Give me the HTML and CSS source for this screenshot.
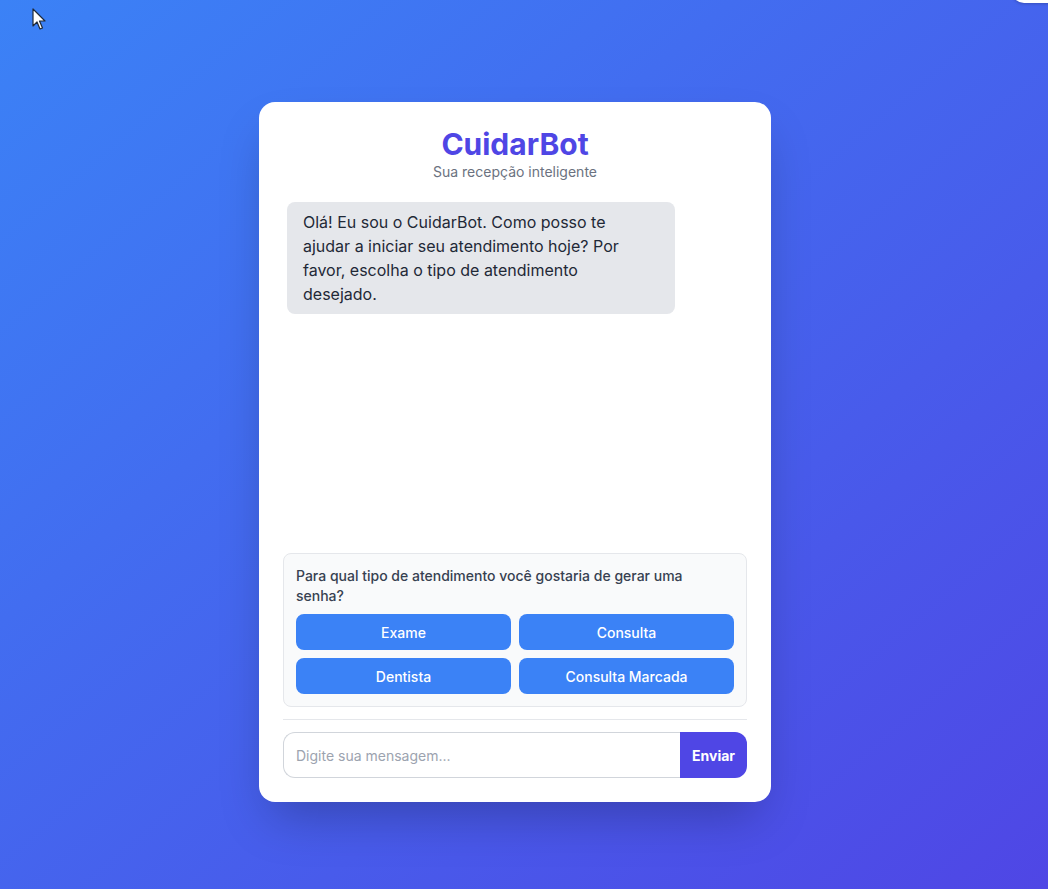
FILE: index.html
```html
<!DOCTYPE html>
<html lang="pt-BR">
<head>
<meta charset="utf-8">
<title>CuidarBot</title>
<link rel="stylesheet" href="styles.css">
</head>
<body>
<div class="page">
  <div class="card">
    <header class="header">
      <h1 class="title">CuidarBot</h1>
      <p class="subtitle">Sua recepção inteligente</p>
    </header>
    <div class="chat">
      <div class="bubble">Olá! Eu sou o CuidarBot. Como posso te ajudar a iniciar seu atendimento hoje? Por favor, escolha o tipo de atendimento desejado.</div>
    </div>
    <div class="options">
      <p class="question">Para qual tipo de atendimento você gostaria de gerar uma senha?</p>
      <div class="grid">
        <button class="opt">Exame</button>
        <button class="opt">Consulta</button>
        <button class="opt">Dentista</button>
        <button class="opt">Consulta Marcada</button>
      </div>
    </div>
    <div class="composer">
      <input class="input" type="text" placeholder="Digite sua mensagem...">
      <button class="send">Enviar</button>
    </div>
  </div>
</div>
<div class="corner"></div>
<svg class="cursor" width="14" height="23" viewBox="0 0 14 23"><path d="M1 1 L1 18 L5 14 L8 21 L10.5 20 L7.5 13 L13 13 Z" fill="#fff" stroke="#1f2937" stroke-width="1.2" stroke-linejoin="round"/></svg>
</body>
</html>
```
FILE: styles.css
```css
* { box-sizing: border-box; }
html, body { margin: 0; padding: 0; }
body {
  font-family: Inter, "Noto Sans", "Liberation Sans", sans-serif;
  min-height: 100vh;
  background: linear-gradient(to bottom right, #3b82f6, #4f46e5);
  overflow: hidden;
  position: relative;
}
.page {
  min-height: 100vh;
  padding: 102px 0 0 259px;
}
.card {
  width: 512px;
  height: 700px;
  background: #fff;
  border-radius: 16px;
  box-shadow: 0 25px 50px -12px rgba(0,0,0,0.25);
  padding: 24px;
  display: flex;
  flex-direction: column;
}
.header { text-align: center; margin-bottom: 16px; }
.title {
  margin: 0;
  font-size: 30px;
  line-height: 36px;
  font-weight: 700;
  color: #4f46e5;
}
.subtitle {
  margin: 0;
  font-size: 14px;
  line-height: 20px;
  color: #6b7280;
}
.chat {
  flex: 1;
  padding: 4px;
  margin-bottom: 8px;
  overflow: hidden;
}
.bubble {
  width: 388px;
  background: #e5e7eb;
  color: #1f2937;
  font-size: 16px;
  line-height: 24px;
  padding: 8px 42px 8px 16px;
  border-radius: 8px;
}
.options {
  background: #f9fafb;
  border: 1px solid #e5e7eb;
  border-radius: 8px;
  padding: 12px;
  margin-bottom: 12px;
}
.question {
  margin: 0 0 8px;
  font-size: 14px;
  line-height: 20px;
  font-weight: 500;
  color: #374151;
}
.grid {
  display: grid;
  grid-template-columns: 1fr 1fr;
  gap: 8px;
}
.opt {
  height: 36px;
  border: none;
  border-radius: 8px;
  background: #3b82f6;
  color: #fff;
  font-family: inherit;
  font-size: 14px;
  font-weight: 500;
  padding: 0;
}
.composer {
  border-top: 1px solid #e5e7eb;
  padding-top: 12px;
  display: flex;
}
.input {
  flex: 1;
  height: 46px;
  border: 1px solid #d1d5db;
  border-right: none;
  border-radius: 12px 0 0 12px;
  padding: 0 12px;
  font-family: inherit;
  font-size: 14px;
  color: #1f2937;
  outline: none;
}
.input::placeholder { color: #9ca3af; }
.send {
  width: 67px;
  height: 46px;
  border: none;
  border-radius: 0 12px 12px 0;
  background: #4f46e5;
  color: #fff;
  font-family: inherit;
  font-size: 14px;
  font-weight: 700;
  padding: 0;
}
.corner {
  position: absolute;
  top: -30px;
  right: -12px;
  width: 48px;
  height: 33px;
  background: #fff;
  border-radius: 12px;
  box-shadow: 0 1px 3px rgba(0,0,0,0.2);
}
.cursor {
  position: absolute;
  left: 32px;
  top: 8px;
}
```
